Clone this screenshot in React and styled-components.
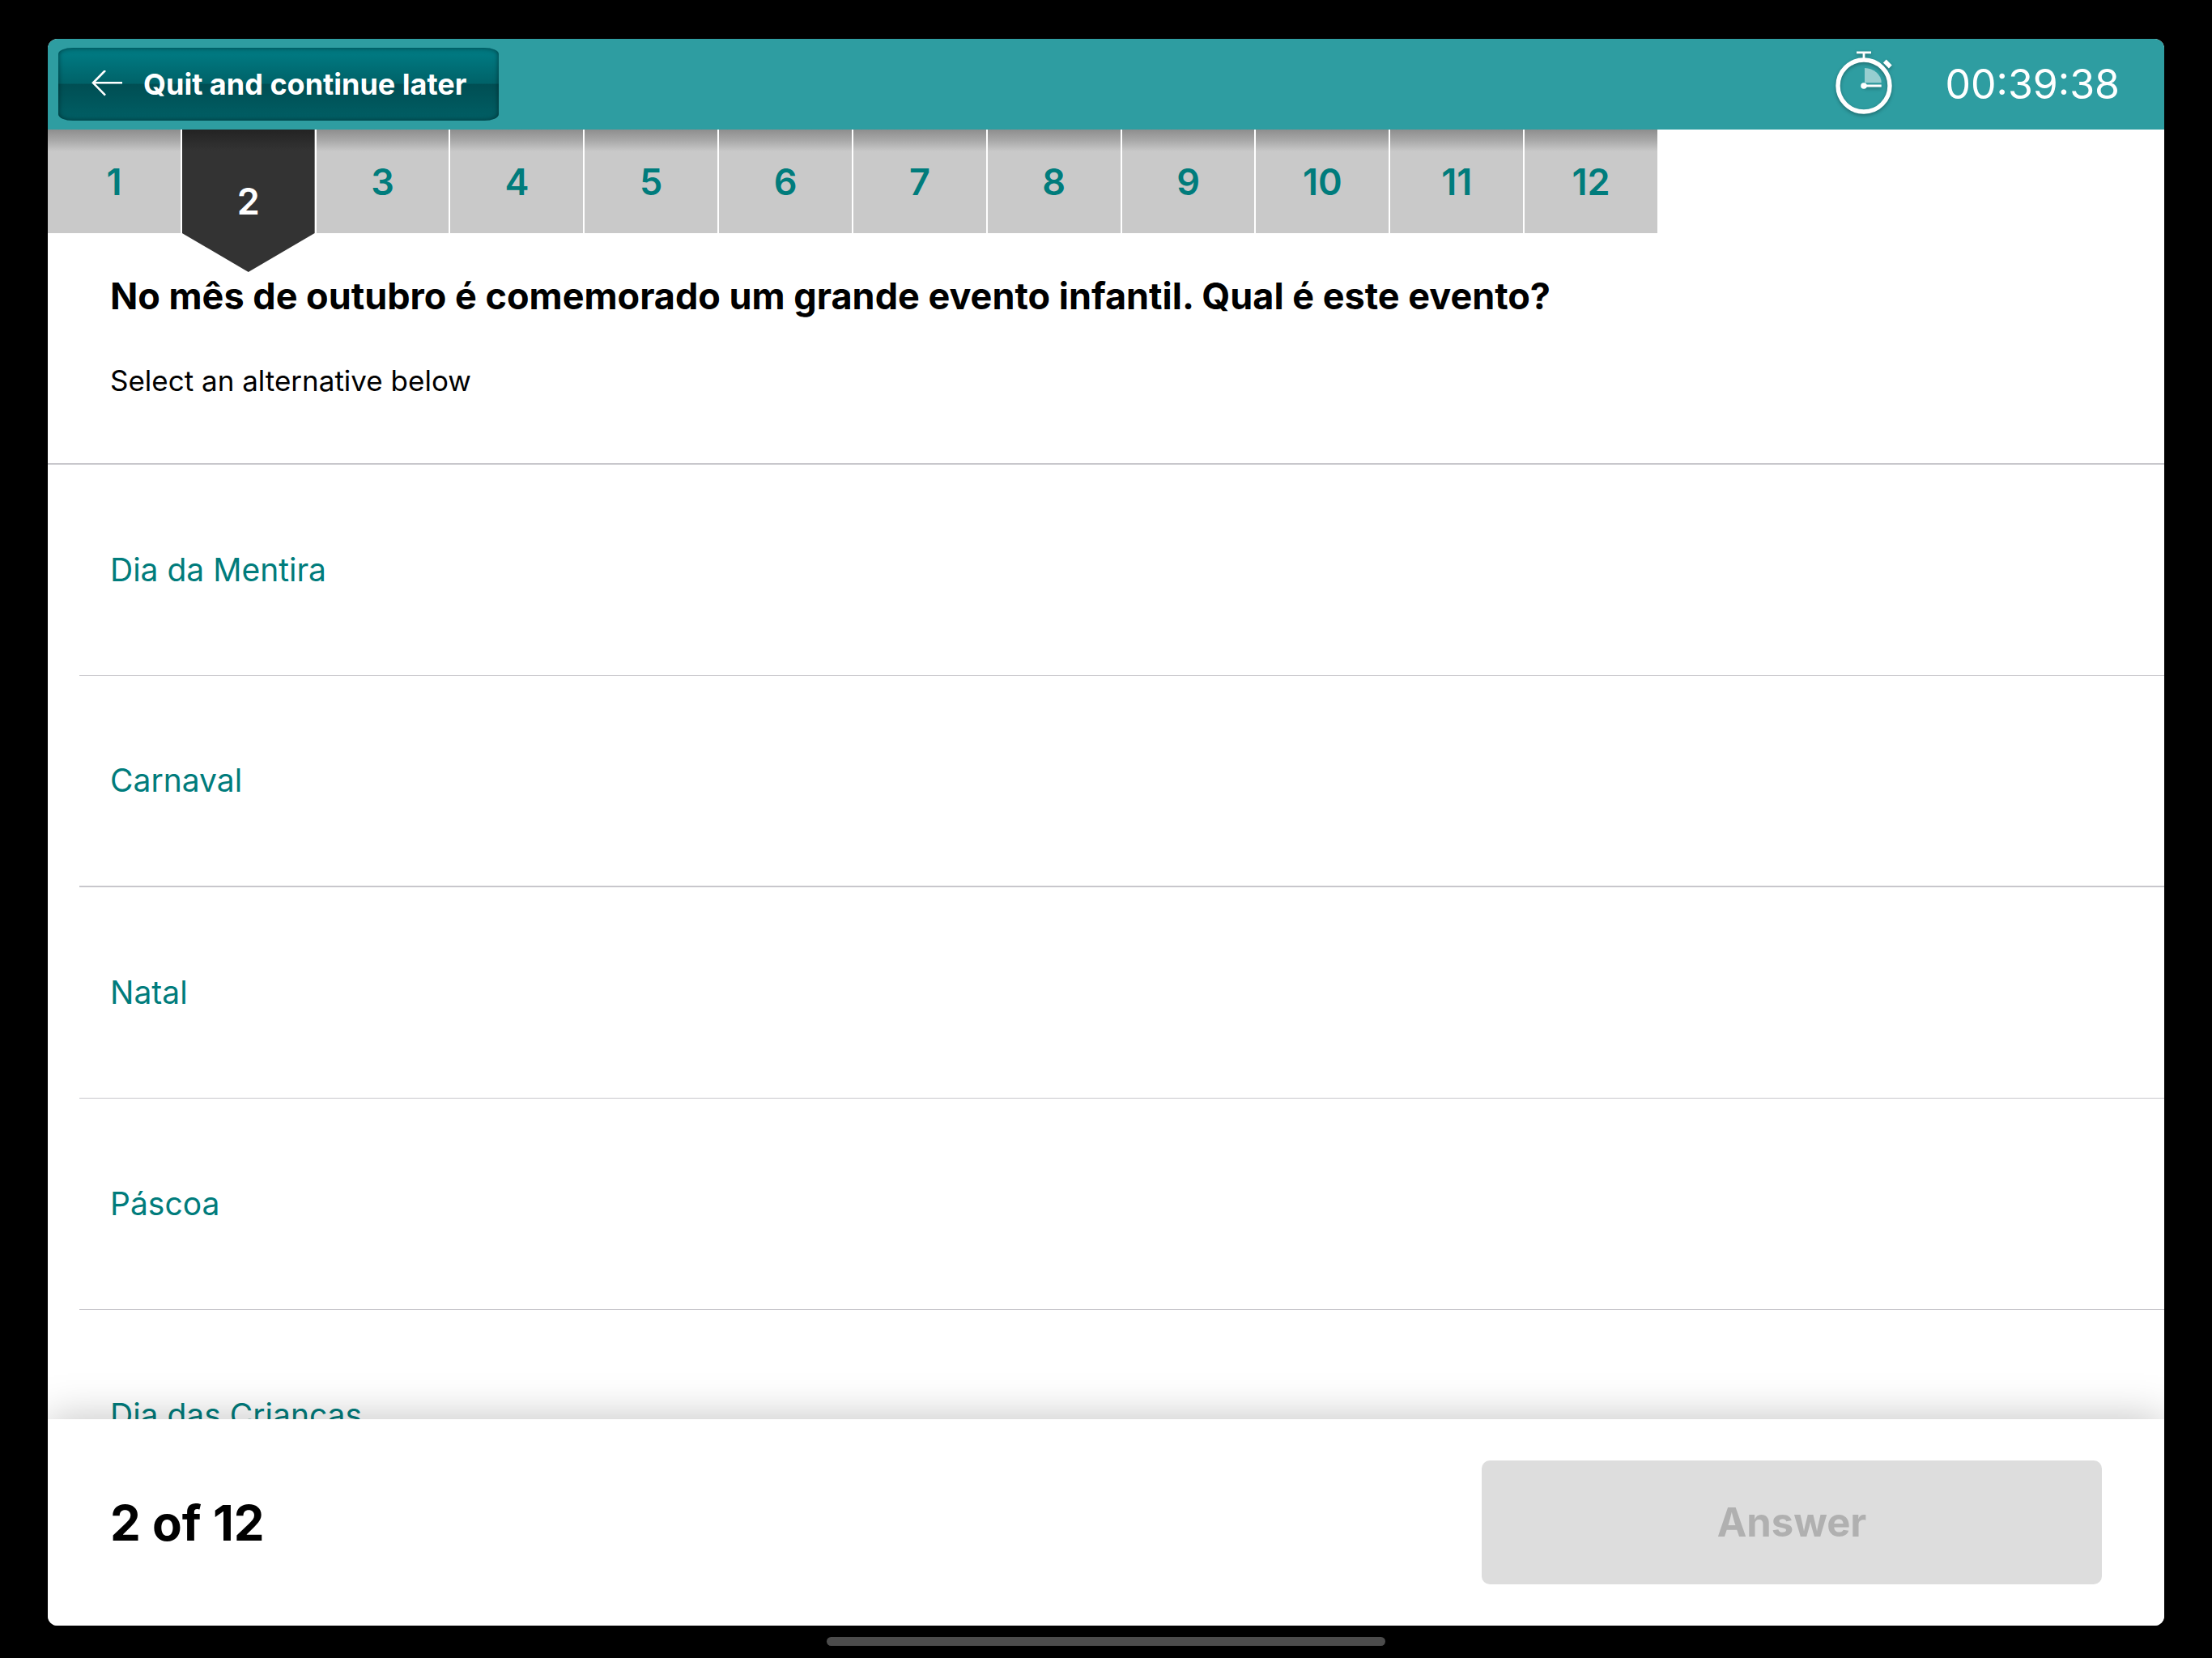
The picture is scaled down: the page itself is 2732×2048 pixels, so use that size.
import React, { useState } from 'react'
import { createGlobalStyle, styled } from 'styled-components'

const GlobalStyle = createGlobalStyle`
    * {
        box-sizing: border-box;
    }

    body {
        margin: 0;
        background-color: #000000;
        font-family: Inter, "Liberation Sans", sans-serif;
    }

    button {
        border: none;
        padding: 0;
        font-family: inherit;
        cursor: pointer;
    }
`

const Screen = styled.div`
    height: 100vh;
    padding: 48px 59px 0;
    display: flex;
    flex-direction: column;
`

const Panel = styled.main`
    flex: 1;
    min-height: 0;
    display: flex;
    flex-direction: column;
    background-color: #FFFFFF;
    border-radius: 12px;
    overflow: hidden;
`

const TopBar = styled.header`
    height: 112px;
    flex-shrink: 0;
    display: flex;
    flex-direction: row;
    align-items: center;
    justify-content: space-between;
    padding: 0 55px 0 13px;
    background-color: #2E9DA1;
`

const QuitButton = styled.button`
    height: 90px;
    display: flex;
    align-items: center;
    gap: 26px;
    padding: 0 40px;
    border-radius: 18px / 8px;
    color: #FFFFFF;
    font-size: 36px;
    font-weight: 700;
    background: linear-gradient(#007A82 0%, #00777F 12%, #006268 49%, #004E53 50%, #005F65 100%);
    box-shadow: inset 0 0 6px rgba(0, 0, 0, 0.5);
`

const Timer = styled.div`
    display: flex;
    align-items: center;
    gap: 64px;
    color: #FFFFFF;
    font-size: 50px;
    font-weight: 400;
`

const Tabs = styled.nav`
    width: 100%;
    max-width: 1988px;
    flex-shrink: 0;
    display: grid;
    grid-template-columns: repeat(12, 1fr);
    gap: 2px;
`

const Tab = styled.button`
    height: ${props => props.$active ? '176px' : '128px'};
    margin-bottom: ${props => props.$active ? '-48px' : '0'};
    background: ${props => props.$active
        ? 'linear-gradient(#232323, #333333 26px)'
        : 'linear-gradient(#8E8E8E, #A9A9A9 14px, #C9C9C9 27px)'};
    clip-path: ${props => props.$active ? 'polygon(0 0, 100% 0, 100% 128px, 50% 100%, 0 128px)' : 'none'};
    color: ${props => props.$active ? '#FFFFFF' : '#007C7C'};
    font-size: 45px;
    font-weight: 600;
`

const Question = styled.section`
    flex-shrink: 0;
    height: 286px;
    padding: 50px 77px 0;
    border-bottom: 2px solid #C8C7CC;
`

const Title = styled.h1`
    margin: 0;
    font-size: 45px;
    font-weight: 700;
    line-height: 56px;
    color: #000000;
`

const Hint = styled.p`
    margin: 54px 0 0;
    font-size: 35px;
    line-height: 44px;
    color: #000000;
`

const Options = styled.ul`
    flex: 1;
    min-height: 0;
    margin: 0;
    padding: 0 0 0 39px;
    list-style: none;
    overflow: hidden;
`

const Option = styled.li`
    height: 261px;
    border-bottom: ${props => props.$strong ? '2px' : '1px'} solid #C8C7CC;
`

const OptionButton = styled.button`
    width: 100%;
    height: 100%;
    padding: 0 0 2px 38px;
    background: none;
    text-align: left;
    color: #007C7C;
    font-size: 39px;
`

const Footer = styled.footer`
    position: relative;
    height: 255px;
    flex-shrink: 0;
    display: flex;
    align-items: center;
    justify-content: space-between;
    padding: 0 77px;
    background-color: #FFFFFF;
    box-shadow: 0 0 50px rgba(0, 0, 0, 0.25);
`

const Progress = styled.span`
    font-size: 60px;
    font-weight: 700;
    color: #000000;
`

const AnswerButton = styled.button`
    width: 766px;
    height: 153px;
    border-radius: 10px;
    background-color: #DDDDDD;
    color: #B0B0B0;
    font-size: 49px;
    font-weight: 700;
`

const HomeArea = styled.div`
    height: 40px;
    flex-shrink: 0;
    display: flex;
    justify-content: center;
    padding-top: 14px;
`

const HomeIndicator = styled.div`
    width: 690px;
    height: 11px;
    border-radius: 6px;
    background-color: #4C4C4C;
`

const options = [
    { text: 'Dia da Mentira' },
    { text: 'Carnaval', strong: true },
    { text: 'Natal' },
    { text: 'Páscoa' },
    { text: 'Dia das Crianças' },
]

const TOTAL = 12

function BackArrow() {
    return (
        <svg width="39" height="34" viewBox="0 0 39 34" fill="none" stroke="#FFFFFF" strokeWidth="2.6" aria-hidden="true">
            <path d="M39 15.3H3M18 0L3 15.3L18 30.6" />
        </svg>
    )
}

function Stopwatch() {
    return (
        <svg width="72" height="80" viewBox="0 0 72 80" fill="none" stroke="#FFFFFF" overflow="visible" aria-hidden="true">
            <g filter="drop-shadow(0 2px 2px rgba(0, 0, 0, 0.3))">
                <circle cx="36" cy="42" r="32" strokeWidth="5.4" />
                <path d="M27 0.8H45M36 1V9" strokeWidth="2.8" />
                <path d="M61.8 11.5L68.8 18.5" strokeWidth="5.4" />
                <path d="M36 42H57.7" strokeWidth="3" />
            </g>
            <path d="M37 38.3V20A21 18.3 0 0 1 57.7 38.3Z" fill="#FFFFFF" fillOpacity="0.5" stroke="none" />
            <circle cx="36" cy="42" r="3.8" fill="#FFFFFF" stroke="none" />
        </svg>
    )
}

function App() {
    const [current, setCurrent] = useState(2)

    return (
        <Screen>
            <GlobalStyle />
            <Panel>
                <TopBar>
                    <QuitButton type="button">
                        <BackArrow />
                        Quit and continue later
                    </QuitButton>
                    <Timer>
                        <Stopwatch />
                        <span>00:39:38</span>
                    </Timer>
                </TopBar>
                <Tabs>
                    {Array.from({ length: TOTAL }, (_, i) => i + 1).map(number => (
                        <Tab
                            key={number}
                            type="button"
                            $active={number === current}
                            onClick={() => setCurrent(number)}
                        >
                            {number}
                        </Tab>
                    ))}
                </Tabs>
                <Question>
                    <Title>No mês de outubro é comemorado um grande evento infantil. Qual é este evento?</Title>
                    <Hint>Select an alternative below</Hint>
                </Question>
                <Options>
                    {options.map(option => (
                        <Option key={option.text} $strong={option.strong}>
                            <OptionButton type="button">{option.text}</OptionButton>
                        </Option>
                    ))}
                </Options>
                <Footer>
                    <Progress>{current} of {TOTAL}</Progress>
                    <AnswerButton type="button" disabled>Answer</AnswerButton>
                </Footer>
            </Panel>
            <HomeArea>
                <HomeIndicator />
            </HomeArea>
        </Screen>
    )
}

export default App
